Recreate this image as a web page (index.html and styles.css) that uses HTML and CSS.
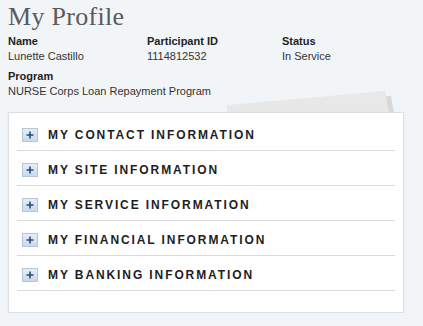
FILE: index.html
```html
<!DOCTYPE html>
<html lang="en">
<head>
  <meta charset="UTF-8">
  <meta name="viewport" content="width=device-width, initial-scale=1.0">
  <title>My Profile</title>
  <link rel="stylesheet" href="styles.css">
</head>
<body>
  <header class="page-header">
      <h1>My Profile</h1>
  </header>
  <section class="profile-info">
      <div class="info-item">
          <div class="info-label">Name</div>
          <div class="info-value">Lunette Castillo</div>
      </div>
      <div class="info-item">
          <div class="info-label">Participant ID</div>
          <div class="info-value">1114812532</div>
      </div>
      <div class="info-item">
          <div class="info-label">Status</div>
          <div class="info-value">In Service</div>
      </div>
      <div class="info-item info-wide">
          <div class="info-label">Program</div>
          <div class="info-value">NURSE Corps Loan Repayment Program</div>
      </div>
  </section>
  <main class="card-wrap">
      <!-- papers sticking out behind the card -->
      <svg class="papers" width="190" height="25" viewBox="0 0 190 25">
          <polygon points="80,25 80,12 172,8 175,25" fill="#d9d9d9"/>
          <polygon points="8,25 8,17 166,3 170,25" fill="#e8e8e8"/>
      </svg>
      <div class="card">
          <div class="section-row"><span class="toggle"><svg width="16" height="14" viewBox="0 0 16 14"><path d="M8 3.5v7M4.5 7h7" stroke="#2a4c74" stroke-width="1.6"/></svg></span>My Contact Information</div>
          <div class="section-row"><span class="toggle"><svg width="16" height="14" viewBox="0 0 16 14"><path d="M8 3.5v7M4.5 7h7" stroke="#2a4c74" stroke-width="1.6"/></svg></span>My Site Information</div>
          <div class="section-row"><span class="toggle"><svg width="16" height="14" viewBox="0 0 16 14"><path d="M8 3.5v7M4.5 7h7" stroke="#2a4c74" stroke-width="1.6"/></svg></span>My Service Information</div>
          <div class="section-row"><span class="toggle"><svg width="16" height="14" viewBox="0 0 16 14"><path d="M8 3.5v7M4.5 7h7" stroke="#2a4c74" stroke-width="1.6"/></svg></span>My Financial Information</div>
          <div class="section-row"><span class="toggle"><svg width="16" height="14" viewBox="0 0 16 14"><path d="M8 3.5v7M4.5 7h7" stroke="#2a4c74" stroke-width="1.6"/></svg></span>My Banking Information</div>
      </div>
  </main>
</body>
</html>
```

FILE: styles.css
```css
body {
    margin: 0;
    padding: 0 19px 0 8px;
    background-color: #f2f5f8;
    font-family: "Liberation Sans", Arial, sans-serif;
    color: #222;
}
.page-header {
    padding-top: 2px;
}
.page-header h1 {
    margin: 0;
    font-family: "Liberation Serif", "Times New Roman", serif;
    font-weight: normal;
    font-size: 26px;
    line-height: 30px;
    letter-spacing: 0.3px;
    color: #5a5a5a;
}
.profile-info {
    display: grid;
    grid-template-columns: 139px 135px auto;
    row-gap: 5px;
    margin-top: 2px;
    font-size: 11px;
    line-height: 15px;
}
.info-wide {
    grid-column: 1 / 4;
}
.info-label {
    font-weight: bold;
    color: #222;
}
.info-value {
    color: #333;
}
.card-wrap {
    position: relative;
    margin-top: 13px;
}
.papers {
    position: absolute;
    left: 211px;
    top: -24px;
}
.card {
    position: relative;
    background-color: #fff;
    border: 1px solid #dcdfe3;
    box-shadow: 0 1px 2px rgba(0, 0, 0, 0.08);
    padding: 3px 8px 21px;
}
.section-row {
    display: flex;
    align-items: center;
    height: 14px;
    padding: 12px 0 8px 5px;
    border-bottom: 1px solid #dadada;
    font-size: 12px;
    font-weight: bold;
    letter-spacing: 1.9px;
    text-transform: uppercase;
    color: #1e1e1e;
}
.toggle {
    display: flex;
    width: 16px;
    height: 14px;
    margin-right: 10px;
    box-sizing: border-box;
    border: 1px solid #b3c6da;
    background: linear-gradient(#e6eef7, #c9d9ea);
}
.toggle svg {
    margin: -1px;
}
```
